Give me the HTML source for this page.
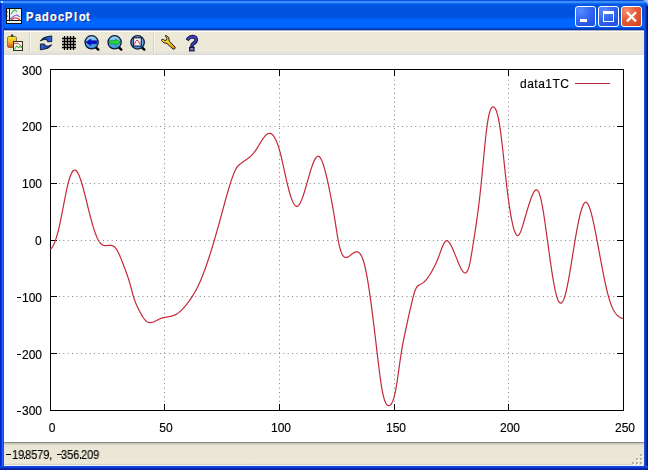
<!DOCTYPE html>
<html><head><meta charset="utf-8">
<style>
html,body{margin:0;padding:0;width:648px;height:470px;overflow:hidden;background:#b0bcf0;}
body{position:relative;font-family:"Liberation Sans",sans-serif;}
.a{position:absolute;}
#title{left:0;top:0;width:648px;height:30px;
background:linear-gradient(to bottom,#0a50d8 0px,#0a50d8 1px,#3a8cff 1px,#3c8eff 3px,#2070f0 3px,#0860e8 4px,#0056e2 5px,#0051dc 12px,#0054e2 17px,#005cf0 18px,#0066ff 20px,#0066ff 27px,#0060f8 27px,#0056e8 28px,#0036b4 29px,#0036b4 30px);}
#cornerR{left:640px;top:0;width:8px;height:8px;background:#a8b4f0;}
#titleR{left:0;top:0;width:648px;height:30px;border-top-right-radius:6px;overflow:hidden;}
#lb{left:0;top:3px;width:4px;height:467px;background:linear-gradient(to right,#0022cc 0px,#0022cc 1px,#0a36da 1px,#0a36da 2px,#2563ff 2px,#2563ff 3px,#1a4fd8 3px,#1a4fd8 4px);}
#rb{left:644px;top:6px;width:4px;height:464px;background:linear-gradient(to right,#1c50d8 0px,#1c50d8 1px,#0040d8 1px,#0040d8 2px,#0a2aa8 2px,#0a2aa8 3px,#00108a 3px,#00108a 4px);}
#bb{left:0;top:466px;width:648px;height:4px;background:linear-gradient(to bottom,#1a4ae0 0px,#1a4ae0 1px,#0a3ad8 1px,#0a3ad8 2px,#0828b0 2px,#0828b0 3px,#0a1e98 3px,#0a1e98 4px);}
#client{left:4px;top:30px;width:640px;height:436px;background:#fff;}
#tb{left:4px;top:30px;width:640px;height:25px;background:linear-gradient(to bottom,#a8b0c8 0px,#a8b0c8 1px,#fdfdf6 1px,#fdfdf6 2px,#ece9d8 2px,#ebe8d8 19px,#eeebdc 20px,#e8e6da 21px,#e6e4d9 23px,#dedcd6 24px,#dedcd6 25px);}
#sb{left:4px;top:442px;width:640px;height:24px;background:linear-gradient(to bottom,#8c8a84 0px,#8c8a84 1px,#c8c4b4 1px,#c8c4b4 2px,#dcd8c8 2px,#dcd8c8 3px,#e6e2d2 3px,#e9e6d6 4px,#ebe8d7 21px,#e4dfcc 22px,#dcd6c4 22px,#dcd6c4 23px,#e8ecf4 23px,#e8ecf4 24px);}
.btn{top:6px;width:19px;height:19px;border:1px solid #fff;border-radius:3px;}
.bl{background:radial-gradient(circle at 25% 20%,#5a8cff 0%,#3a6ff5 35%,#2556e6 75%,#1f4fd8 100%);}
#title-text{color:#fff;font-weight:bold;font-size:12px;line-height:14px;letter-spacing:0.5px;word-spacing:-3px;text-shadow:1px 1px 0 #0a1f8a;white-space:nowrap;}
.lbl{font-size:12px;color:#000;white-space:nowrap;line-height:12px;will-change:transform;-webkit-text-stroke:0.15px #000;}
.st{transform:scaleX(0.915);transform-origin:0 0;}
.tl{top:0;-webkit-text-stroke:0.25px #fff;transform:scaleX(0.92);transform-origin:0 0;}
.sep{top:33px;width:1px;height:20px;background:#d8d4c4;border-right:1px solid #f6f4ec;}
</style></head><body>
<div class="a" id="titleR"><div class="a" id="title"></div></div>
<div class="a" id="lb"></div>
<div class="a" style="left:1px;top:1px;width:2px;height:2px;background:#a0e8ff"></div>
<div class="a" id="rb"></div>
<div class="a" id="bb"></div>
<div class="a" id="client"></div>
<div class="a" id="tb"></div>
<div class="a" id="sb"></div>

<!-- app icon -->
<svg class="a" style="left:6px;top:8px" width="16" height="16" viewBox="0 0 16 16">
<rect x="0" y="0" width="16" height="16" fill="#101010"/>
<rect x="1" y="1" width="14" height="14" fill="#f4f2ee"/>
<rect x="3" y="1" width="1" height="12" fill="#101010"/>
<rect x="1" y="12" width="14" height="1" fill="#101010"/>
<rect x="1" y="3" width="1" height="2" fill="#e88a4a"/>
<rect x="1" y="7" width="1" height="2" fill="#8cd070"/>
<path d="M5,6 L7,3 L9,2 L11,4" stroke="#50c880" stroke-width="1.5" fill="none"/>
<path d="M4,11 L8,8 L11,7 L14,9" stroke="#8070e0" stroke-width="1.3" fill="none"/>
<path d="M5,12 L8,10 L11,10 L14,12" stroke="#e03030" stroke-width="1.2" fill="none"/>
</svg>
<div class="a" id="title-text" style="left:0;top:10px"><span class="a tl" style="left:26.0px">P</span><span class="a tl" style="left:34.9px">a</span><span class="a tl" style="left:42.3px">d</span><span class="a tl" style="left:50.0px">o</span><span class="a tl" style="left:57.5px">c</span><span class="a tl" style="left:65.1px">P</span><span class="a tl" style="left:74.1px">l</span><span class="a tl" style="left:78.6px">o</span><span class="a tl" style="left:86.4px">t</span></div>

<!-- title buttons -->
<div class="a btn bl" style="left:575px"><div class="a" style="left:4px;top:12px;width:7px;height:3px;background:#fff"></div></div>
<div class="a btn bl" style="left:598px"><div class="a" style="left:4px;top:4px;width:9px;height:7px;border:1px solid #fff;border-top-width:3px"></div></div>
<div class="a btn" style="left:621px;background:radial-gradient(circle at 25% 20%,#f59070 0%,#e8603c 40%,#d84a22 80%,#c8401c 100%)">
<svg class="a" style="left:0;top:0" width="19" height="19" viewBox="0 0 19 19"><path d="M5,5.2 L14,14.4 M14,5.2 L5,14.4" stroke="#fff" stroke-width="2.3" stroke-linecap="butt"/></svg></div>

<!-- toolbar icons -->
<svg class="a" style="left:4px;top:32px" width="22" height="22" viewBox="0 0 22 22">
<defs><linearGradient id="clip" x1="0" y1="0" x2="0" y2="1"><stop offset="0" stop-color="#f8e838"/><stop offset="0.55" stop-color="#f0b020"/><stop offset="1" stop-color="#d05018"/></linearGradient></defs>
<rect x="3.5" y="4.5" width="9" height="11" rx="1.5" fill="url(#clip)" stroke="#806030" stroke-width="0.8"/>
<rect x="6.8" y="2.6" width="2.6" height="2.2" rx="0.8" fill="#302828"/>
<rect x="9.5" y="9.5" width="9" height="9" fill="#f8f6f0" stroke="#383020" stroke-width="1"/>
<path d="M10,11.3 L14,11.3 L18,15" stroke="#c05040" stroke-width="1" fill="none"/>
<path d="M10.5,17.5 L12.5,14 L14.5,15.5 L16.5,14.5 L18,16" stroke="#40c040" stroke-width="1.1" fill="none"/>
</svg>
<div class="a sep" style="left:29px"></div>
<!-- refresh -->
<svg class="a" style="left:38px;top:34px" width="16" height="18" viewBox="0 0 16 18">
<defs><linearGradient id="rf" x1="0" y1="0" x2="1" y2="0"><stop offset="0" stop-color="#101c48"/><stop offset="0.45" stop-color="#1a48b0"/><stop offset="1" stop-color="#2f68d8"/></linearGradient></defs>
<path d="M2.4,6.9 Q4.8,3 9.5,2.6 L13.7,1.9 L13.7,7.7 L9.5,7.7 L8.8,5.6 Q5.5,5 2.4,6.9 Z" fill="url(#rf)" stroke="#08102c" stroke-width="0.9" stroke-linejoin="round"/>
<g transform="rotate(180 8.05 8.85)"><path d="M2.4,6.9 Q4.8,3 9.5,2.6 L13.7,1.9 L13.7,7.7 L9.5,7.7 L8.8,5.6 Q5.5,5 2.4,6.9 Z" fill="url(#rf)" stroke="#08102c" stroke-width="0.9" stroke-linejoin="round"/></g>
</svg>
<!-- grid -->
<svg class="a" style="left:62px;top:36px" width="14" height="14" viewBox="0 0 14 14">
<path d="M2.5,0 V14 M5.5,0 V14 M8.5,0 V14 M11.5,0 V14 M0,2.5 H14 M0,5.5 H14 M0,8.5 H14 M0,11.5 H14" stroke="#000" stroke-width="1.3"/>
</svg>
<!-- zoom back -->
<svg class="a" style="left:80px;top:32px" width="22" height="22" viewBox="0 0 22 22">
<defs><linearGradient id="lens" x1="0" y1="0" x2="0" y2="1"><stop offset="0" stop-color="#a8dcf8"/><stop offset="0.5" stop-color="#60b0ec"/><stop offset="1" stop-color="#3c90d8"/></linearGradient></defs>
<line x1="15.5" y1="15" x2="18.3" y2="17.6" stroke="#000" stroke-width="2.4" stroke-linecap="round"/>
<circle cx="11.6" cy="10.3" r="6.6" fill="url(#lens)" stroke="#0c1838" stroke-width="1.3"/>
<path d="M5.8,10.2 L10.8,7 L10.8,8.7 L16.8,8.8 L16.8,11.8 L10.8,11.8 L10.8,13.4 Z" fill="#0810d0" stroke="#000870" stroke-width="0.5"/>
</svg>
<!-- zoom forward -->
<svg class="a" style="left:103px;top:32px" width="22" height="22" viewBox="0 0 22 22">
<line x1="15.5" y1="15" x2="18.3" y2="17.6" stroke="#000" stroke-width="2.4" stroke-linecap="round"/>
<circle cx="11.6" cy="10.3" r="6.6" fill="url(#lens)" stroke="#0c1838" stroke-width="1.3"/>
<path d="M17.4,10.2 L12.4,7 L12.4,8.7 L6.4,8.8 L6.4,11.8 L12.4,11.8 L12.4,13.4 Z" fill="#20e030" stroke="#087010" stroke-width="0.5"/>
</svg>
<!-- zoom fit -->
<svg class="a" style="left:126px;top:32px" width="22" height="22" viewBox="0 0 22 22">
<line x1="15.5" y1="15" x2="18.3" y2="17.6" stroke="#000" stroke-width="2.4" stroke-linecap="round"/>
<circle cx="11.6" cy="10.4" r="6.7" fill="url(#lens)" stroke="#0c1838" stroke-width="1.3"/>
<rect x="7.3" y="5.8" width="8" height="8.3" fill="#fbeef2" stroke="#0c1040" stroke-width="1.1"/>
<path d="M8.5,12.5 Q9.5,8 11,8.2 Q12.5,8 14,12.5" stroke="#d03040" stroke-width="1" fill="none"/>
</svg>
<div class="a sep" style="left:153px"></div>
<!-- wrench -->
<svg class="a" style="left:157px;top:32px" width="22" height="22" viewBox="0 0 22 22">
<defs><linearGradient id="wr" x1="0" y1="0" x2="1" y2="1"><stop offset="0" stop-color="#f8f040"/><stop offset="0.6" stop-color="#f0c020"/><stop offset="1" stop-color="#e08010"/></linearGradient></defs>
<path d="M8.6,3.4 L10.2,4 L11.8,6 L12.2,9 L18.2,15.2 L17.8,16.8 L16.2,17.2 L10,11.5 L6.5,10.6 L4.6,8.4 L5,7.2 L6.2,7.4 L8,8.6 L9.6,8 L9.8,6.2 L8.4,4.4 Z" fill="url(#wr)" stroke="#281c08" stroke-width="1" stroke-linejoin="round"/>
</svg>
<!-- help -->
<svg class="a" style="left:181px;top:32px" width="22" height="22" viewBox="0 0 22 22">
<path d="M7.2,6.8 Q8.8,4.6 11.6,4.6 Q15.2,4.8 15.2,7.8 Q15.2,10 12.6,11.4 Q11,12.3 11,13.6" stroke="#10104a" stroke-width="3.6" fill="none" stroke-linecap="square"/>
<path d="M7.2,6.8 Q8.8,4.6 11.6,4.6 Q15.2,4.8 15.2,7.8 Q15.2,10 12.6,11.4 Q11,12.3 11,13.6" stroke="#4646c8" stroke-width="1.6" fill="none" stroke-linecap="square"/>
<rect x="8.6" y="15.4" width="4.4" height="3.4" fill="#8080c0" stroke="#10104a" stroke-width="1.2"/>
</svg>

<!-- plot -->
<svg class="a" style="left:0;top:0" width="648" height="470" viewBox="0 0 648 470">
<g stroke="#808080" stroke-width="1" stroke-dasharray="1,3.4" fill="none">
<path d="M58.9,126.5 H617 M58.9,183.5 H617 M58.9,240.5 H617 M58.9,296.5 H617 M58.9,353.5 H617"/>
<path d="M164.5,401.8 V76 M279.5,401.8 V76 M394.5,401.8 V76 M508.5,401.8 V76"/>
</g>
<g stroke="#000" stroke-width="1" fill="none">
<rect x="50.5" y="69.5" width="573" height="341"/>
<path d="M51,126.5 H57 M51,183.5 H57 M51,240.5 H57 M51,296.5 H57 M51,353.5 H57"/>
<path d="M617,126.5 H623 M617,183.5 H623 M617,240.5 H623 M617,296.5 H623 M617,353.5 H623"/>
<path d="M164.5,404 V410 M279.5,404 V410 M394.5,404 V410 M508.5,404 V410"/>
<path d="M164.5,70 V76 M279.5,70 V76 M394.5,70 V76 M508.5,70 V76"/>
</g>
<path d="M575,83.5 H610" stroke="#b8203a" stroke-width="1.1"/>
<path d="M50.0,249.60 L50.5,249.24 L51.0,248.78 L51.5,248.22 L52.0,247.56 L52.5,246.80 L53.0,245.93 L53.5,244.97 L54.0,243.90 L54.5,242.74 L55.0,241.47 L55.5,240.10 L56.0,238.63 L56.5,237.06 L57.0,235.39 L57.5,233.62 L58.0,231.74 L58.5,229.76 L59.0,227.69 L59.5,225.51 L60.0,223.23 L60.5,220.86 L61.0,218.41 L61.5,215.91 L62.0,213.35 L62.5,210.76 L63.0,208.14 L63.5,205.52 L64.0,202.91 L64.5,200.32 L65.0,197.76 L65.5,195.25 L66.0,192.80 L66.5,190.43 L67.0,188.15 L67.5,185.97 L68.0,183.91 L68.5,181.97 L69.0,180.18 L69.5,178.53 L70.0,177.02 L70.5,175.65 L71.0,174.43 L71.5,173.35 L72.0,172.42 L72.5,171.64 L73.0,171.02 L73.5,170.55 L74.0,170.23 L74.5,170.08 L75.0,170.08 L75.5,170.24 L76.0,170.56 L76.5,171.02 L77.0,171.63 L77.5,172.37 L78.0,173.23 L78.5,174.22 L79.0,175.33 L79.5,176.54 L80.0,177.86 L80.5,179.27 L81.0,180.77 L81.5,182.35 L82.0,184.00 L82.5,185.72 L83.0,187.51 L83.5,189.35 L84.0,191.24 L84.5,193.17 L85.0,195.14 L85.5,197.14 L86.0,199.16 L86.5,201.19 L87.0,203.23 L87.5,205.28 L88.0,207.32 L88.5,209.35 L89.0,211.37 L89.5,213.36 L90.0,215.31 L90.5,217.24 L91.0,219.12 L91.5,220.96 L92.0,222.75 L92.5,224.50 L93.0,226.19 L93.5,227.83 L94.0,229.41 L94.5,230.92 L95.0,232.37 L95.5,233.76 L96.0,235.07 L96.5,236.31 L97.0,237.46 L97.5,238.54 L98.0,239.54 L98.5,240.44 L99.0,241.27 L99.5,242.01 L100.0,242.67 L100.5,243.25 L101.0,243.76 L101.5,244.20 L102.0,244.58 L102.5,244.89 L103.0,245.14 L103.5,245.33 L104.0,245.47 L104.5,245.57 L105.0,245.62 L105.5,245.64 L106.0,245.64 L106.5,245.61 L107.0,245.57 L107.5,245.51 L108.0,245.45 L108.5,245.39 L109.0,245.34 L109.5,245.30 L110.0,245.28 L110.5,245.29 L111.0,245.33 L111.5,245.40 L112.0,245.52 L112.5,245.68 L113.0,245.90 L113.5,246.18 L114.0,246.52 L114.5,246.94 L115.0,247.43 L115.5,248.01 L116.0,248.67 L116.5,249.40 L117.0,250.20 L117.5,251.07 L118.0,252.00 L118.5,252.98 L119.0,254.02 L119.5,255.11 L120.0,256.25 L120.5,257.42 L121.0,258.64 L121.5,259.88 L122.0,261.15 L122.5,262.44 L123.0,263.75 L123.5,265.08 L124.0,266.41 L124.5,267.76 L125.0,269.10 L125.5,270.44 L126.0,271.79 L126.5,273.15 L127.0,274.54 L127.5,275.96 L128.0,277.43 L128.5,278.94 L129.0,280.52 L129.5,282.17 L130.0,283.89 L130.5,285.70 L131.0,287.57 L131.5,289.46 L132.0,291.35 L132.5,293.20 L133.0,294.99 L133.5,296.69 L134.0,298.28 L134.5,299.77 L135.0,301.17 L135.5,302.49 L136.0,303.74 L136.5,304.92 L137.0,306.05 L137.5,307.12 L138.0,308.15 L138.5,309.14 L139.0,310.11 L139.5,311.05 L140.0,311.99 L140.5,312.91 L141.0,313.83 L141.5,314.72 L142.0,315.59 L142.5,316.43 L143.0,317.24 L143.5,318.00 L144.0,318.71 L144.5,319.37 L145.0,319.96 L145.5,320.49 L146.0,320.95 L146.5,321.34 L147.0,321.68 L147.5,321.96 L148.0,322.19 L148.5,322.36 L149.0,322.49 L149.5,322.57 L150.0,322.61 L150.5,322.61 L151.0,322.57 L151.5,322.49 L152.0,322.39 L152.5,322.26 L153.0,322.10 L153.5,321.92 L154.0,321.72 L154.5,321.50 L155.0,321.26 L155.5,321.02 L156.0,320.77 L156.5,320.51 L157.0,320.25 L157.5,319.99 L158.0,319.73 L158.5,319.48 L159.0,319.24 L159.5,319.00 L160.0,318.79 L160.5,318.59 L161.0,318.40 L161.5,318.23 L162.0,318.08 L162.5,317.94 L163.0,317.80 L163.5,317.68 L164.0,317.57 L164.5,317.46 L165.0,317.37 L165.5,317.27 L166.0,317.18 L166.5,317.10 L167.0,317.01 L167.5,316.93 L168.0,316.84 L168.5,316.75 L169.0,316.66 L169.5,316.57 L170.0,316.47 L170.5,316.36 L171.0,316.25 L171.5,316.12 L172.0,315.99 L172.5,315.84 L173.0,315.68 L173.5,315.51 L174.0,315.32 L174.5,315.11 L175.0,314.89 L175.5,314.65 L176.0,314.39 L176.5,314.11 L177.0,313.80 L177.5,313.47 L178.0,313.13 L178.5,312.76 L179.0,312.37 L179.5,311.96 L180.0,311.54 L180.5,311.09 L181.0,310.63 L181.5,310.15 L182.0,309.65 L182.5,309.14 L183.0,308.61 L183.5,308.07 L184.0,307.51 L184.5,306.94 L185.0,306.36 L185.5,305.76 L186.0,305.15 L186.5,304.53 L187.0,303.89 L187.5,303.25 L188.0,302.59 L188.5,301.93 L189.0,301.25 L189.5,300.56 L190.0,299.86 L190.5,299.14 L191.0,298.41 L191.5,297.66 L192.0,296.90 L192.5,296.12 L193.0,295.32 L193.5,294.50 L194.0,293.67 L194.5,292.81 L195.0,291.93 L195.5,291.03 L196.0,290.11 L196.5,289.16 L197.0,288.19 L197.5,287.20 L198.0,286.18 L198.5,285.13 L199.0,284.06 L199.5,282.96 L200.0,281.83 L200.5,280.68 L201.0,279.50 L201.5,278.29 L202.0,277.06 L202.5,275.81 L203.0,274.53 L203.5,273.23 L204.0,271.91 L204.5,270.56 L205.0,269.19 L205.5,267.80 L206.0,266.39 L206.5,264.96 L207.0,263.51 L207.5,262.04 L208.0,260.55 L208.5,259.04 L209.0,257.51 L209.5,255.97 L210.0,254.40 L210.5,252.82 L211.0,251.23 L211.5,249.61 L212.0,247.98 L212.5,246.34 L213.0,244.68 L213.5,243.01 L214.0,241.32 L214.5,239.62 L215.0,237.91 L215.5,236.19 L216.0,234.45 L216.5,232.70 L217.0,230.94 L217.5,229.17 L218.0,227.39 L218.5,225.60 L219.0,223.80 L219.5,221.99 L220.0,220.18 L220.5,218.35 L221.0,216.52 L221.5,214.68 L222.0,212.84 L222.5,210.99 L223.0,209.14 L223.5,207.29 L224.0,205.45 L224.5,203.61 L225.0,201.78 L225.5,199.96 L226.0,198.15 L226.5,196.36 L227.0,194.59 L227.5,192.84 L228.0,191.11 L228.5,189.41 L229.0,187.73 L229.5,186.08 L230.0,184.47 L230.5,182.89 L231.0,181.35 L231.5,179.85 L232.0,178.39 L232.5,176.97 L233.0,175.61 L233.5,174.29 L234.0,173.04 L234.5,171.85 L235.0,170.74 L235.5,169.71 L236.0,168.76 L236.5,167.91 L237.0,167.15 L237.5,166.50 L238.0,165.93 L238.5,165.44 L239.0,164.98 L239.5,164.56 L240.0,164.15 L240.5,163.75 L241.0,163.37 L241.5,162.99 L242.0,162.63 L242.5,162.27 L243.0,161.91 L243.5,161.57 L244.0,161.22 L244.5,160.87 L245.0,160.53 L245.5,160.18 L246.0,159.83 L246.5,159.48 L247.0,159.12 L247.5,158.75 L248.0,158.37 L248.5,157.99 L249.0,157.59 L249.5,157.17 L250.0,156.75 L250.5,156.30 L251.0,155.84 L251.5,155.36 L252.0,154.85 L252.5,154.32 L253.0,153.77 L253.5,153.19 L254.0,152.59 L254.5,151.95 L255.0,151.28 L255.5,150.58 L256.0,149.85 L256.5,149.09 L257.0,148.31 L257.5,147.52 L258.0,146.71 L258.5,145.89 L259.0,145.06 L259.5,144.24 L260.0,143.41 L260.5,142.59 L261.0,141.78 L261.5,140.98 L262.0,140.20 L262.5,139.45 L263.0,138.71 L263.5,138.01 L264.0,137.34 L264.5,136.71 L265.0,136.12 L265.5,135.57 L266.0,135.07 L266.5,134.63 L267.0,134.24 L267.5,133.91 L268.0,133.65 L268.5,133.45 L269.0,133.33 L269.5,133.28 L270.0,133.31 L270.5,133.42 L271.0,133.62 L271.5,133.89 L272.0,134.25 L272.5,134.69 L273.0,135.22 L273.5,135.83 L274.0,136.53 L274.5,137.31 L275.0,138.19 L275.5,139.15 L276.0,140.20 L276.5,141.35 L277.0,142.59 L277.5,143.92 L278.0,145.34 L278.5,146.86 L279.0,148.48 L279.5,150.19 L280.0,152.01 L280.5,153.91 L281.0,155.91 L281.5,157.98 L282.0,160.12 L282.5,162.31 L283.0,164.54 L283.5,166.81 L284.0,169.09 L284.5,171.38 L285.0,173.66 L285.5,175.93 L286.0,178.18 L286.5,180.38 L287.0,182.54 L287.5,184.63 L288.0,186.66 L288.5,188.62 L289.0,190.50 L289.5,192.29 L290.0,194.01 L290.5,195.63 L291.0,197.15 L291.5,198.58 L292.0,199.90 L292.5,201.12 L293.0,202.21 L293.5,203.20 L294.0,204.05 L294.5,204.78 L295.0,205.38 L295.5,205.84 L296.0,206.15 L296.5,206.32 L297.0,206.34 L297.5,206.20 L298.0,205.91 L298.5,205.47 L299.0,204.90 L299.5,204.19 L300.0,203.36 L300.5,202.42 L301.0,201.37 L301.5,200.21 L302.0,198.97 L302.5,197.64 L303.0,196.23 L303.5,194.75 L304.0,193.21 L304.5,191.62 L305.0,189.97 L305.5,188.29 L306.0,186.58 L306.5,184.84 L307.0,183.09 L307.5,181.32 L308.0,179.56 L308.5,177.80 L309.0,176.05 L309.5,174.33 L310.0,172.64 L310.5,170.99 L311.0,169.39 L311.5,167.84 L312.0,166.35 L312.5,164.93 L313.0,163.59 L313.5,162.34 L314.0,161.18 L314.5,160.12 L315.0,159.17 L315.5,158.35 L316.0,157.64 L316.5,157.08 L317.0,156.65 L317.5,156.37 L318.0,156.26 L318.5,156.30 L319.0,156.52 L319.5,156.91 L320.0,157.46 L320.5,158.16 L321.0,159.01 L321.5,160.01 L322.0,161.13 L322.5,162.39 L323.0,163.78 L323.5,165.27 L324.0,166.88 L324.5,168.60 L325.0,170.41 L325.5,172.31 L326.0,174.30 L326.5,176.37 L327.0,178.50 L327.5,180.71 L328.0,182.98 L328.5,185.29 L329.0,187.67 L329.5,190.10 L330.0,192.58 L330.5,195.12 L331.0,197.71 L331.5,200.37 L332.0,203.08 L332.5,205.84 L333.0,208.67 L333.5,211.55 L334.0,214.50 L334.5,217.50 L335.0,220.57 L335.5,223.70 L336.0,226.88 L336.5,230.10 L337.0,233.28 L337.5,236.36 L338.0,239.25 L338.5,241.90 L339.0,244.29 L339.5,246.44 L340.0,248.36 L340.5,250.06 L341.0,251.54 L341.5,252.83 L342.0,253.93 L342.5,254.86 L343.0,255.63 L343.5,256.24 L344.0,256.72 L344.5,257.06 L345.0,257.29 L345.5,257.42 L346.0,257.45 L346.5,257.40 L347.0,257.28 L347.5,257.10 L348.0,256.88 L348.5,256.61 L349.0,256.30 L349.5,255.96 L350.0,255.60 L350.5,255.22 L351.0,254.83 L351.5,254.44 L352.0,254.05 L352.5,253.67 L353.0,253.31 L353.5,252.97 L354.0,252.66 L354.5,252.39 L355.0,252.16 L355.5,251.98 L356.0,251.85 L356.5,251.79 L357.0,251.80 L357.5,251.88 L358.0,252.05 L358.5,252.30 L359.0,252.65 L359.5,253.10 L360.0,253.67 L360.5,254.34 L361.0,255.14 L361.5,256.07 L362.0,257.14 L362.5,258.34 L363.0,259.70 L363.5,261.21 L364.0,262.88 L364.5,264.72 L365.0,266.74 L365.5,268.94 L366.0,271.31 L366.5,273.84 L367.0,276.54 L367.5,279.38 L368.0,282.37 L368.5,285.49 L369.0,288.74 L369.5,292.10 L370.0,295.58 L370.5,299.16 L371.0,302.83 L371.5,306.60 L372.0,310.44 L372.5,314.36 L373.0,318.34 L373.5,322.38 L374.0,326.46 L374.5,330.59 L375.0,334.76 L375.5,338.95 L376.0,343.17 L376.5,347.39 L377.0,351.62 L377.5,355.85 L378.0,360.05 L378.5,364.20 L379.0,368.27 L379.5,372.23 L380.0,376.04 L380.5,379.69 L381.0,383.13 L381.5,386.35 L382.0,389.31 L382.5,391.98 L383.0,394.37 L383.5,396.49 L384.0,398.36 L384.5,399.97 L385.0,401.36 L385.5,402.52 L386.0,403.48 L386.5,404.25 L387.0,404.84 L387.5,405.25 L388.0,405.52 L388.5,405.64 L389.0,405.63 L389.5,405.50 L390.0,405.25 L390.5,404.87 L391.0,404.33 L391.5,403.64 L392.0,402.77 L392.5,401.72 L393.0,400.48 L393.5,399.02 L394.0,397.35 L394.5,395.44 L395.0,393.28 L395.5,390.87 L396.0,388.19 L396.5,385.26 L397.0,382.13 L397.5,378.83 L398.0,375.40 L398.5,371.89 L399.0,368.34 L399.5,364.79 L400.0,361.29 L400.5,357.86 L401.0,354.57 L401.5,351.43 L402.0,348.47 L402.5,345.66 L403.0,342.98 L403.5,340.41 L404.0,337.93 L404.5,335.52 L405.0,333.15 L405.5,330.81 L406.0,328.48 L406.5,326.15 L407.0,323.83 L407.5,321.52 L408.0,319.22 L408.5,316.94 L409.0,314.68 L409.5,312.44 L410.0,310.22 L410.5,308.04 L411.0,305.89 L411.5,303.77 L412.0,301.69 L412.5,299.65 L413.0,297.67 L413.5,295.78 L414.0,294.01 L414.5,292.36 L415.0,290.88 L415.5,289.58 L416.0,288.48 L416.5,287.58 L417.0,286.85 L417.5,286.26 L418.0,285.78 L418.5,285.41 L419.0,285.10 L419.5,284.83 L420.0,284.58 L420.5,284.33 L421.0,284.05 L421.5,283.76 L422.0,283.45 L422.5,283.11 L423.0,282.75 L423.5,282.36 L424.0,281.95 L424.5,281.50 L425.0,281.03 L425.5,280.52 L426.0,279.98 L426.5,279.40 L427.0,278.79 L427.5,278.14 L428.0,277.46 L428.5,276.75 L429.0,276.01 L429.5,275.25 L430.0,274.45 L430.5,273.64 L431.0,272.80 L431.5,271.94 L432.0,271.05 L432.5,270.15 L433.0,269.24 L433.5,268.30 L434.0,267.34 L434.5,266.35 L435.0,265.33 L435.5,264.28 L436.0,263.20 L436.5,262.09 L437.0,260.93 L437.5,259.73 L438.0,258.49 L438.5,257.20 L439.0,255.86 L439.5,254.50 L440.0,253.11 L440.5,251.73 L441.0,250.37 L441.5,249.03 L442.0,247.74 L442.5,246.51 L443.0,245.36 L443.5,244.30 L444.0,243.35 L444.5,242.51 L445.0,241.82 L445.5,241.28 L446.0,240.90 L446.5,240.71 L447.0,240.70 L447.5,240.86 L448.0,241.16 L448.5,241.60 L449.0,242.17 L449.5,242.83 L450.0,243.59 L450.5,244.43 L451.0,245.33 L451.5,246.30 L452.0,247.33 L452.5,248.41 L453.0,249.53 L453.5,250.69 L454.0,251.89 L454.5,253.11 L455.0,254.35 L455.5,255.60 L456.0,256.86 L456.5,258.12 L457.0,259.38 L457.5,260.63 L458.0,261.85 L458.5,263.06 L459.0,264.23 L459.5,265.37 L460.0,266.46 L460.5,267.50 L461.0,268.49 L461.5,269.41 L462.0,270.24 L462.5,270.99 L463.0,271.63 L463.5,272.16 L464.0,272.58 L464.5,272.85 L465.0,272.98 L465.5,272.95 L466.0,272.73 L466.5,272.32 L467.0,271.70 L467.5,270.85 L468.0,269.76 L468.5,268.41 L469.0,266.78 L469.5,264.87 L470.0,262.66 L470.5,260.14 L471.0,257.35 L471.5,254.37 L472.0,251.24 L472.5,248.02 L473.0,244.77 L473.5,241.55 L474.0,238.38 L474.5,235.25 L475.0,232.10 L475.5,228.89 L476.0,225.59 L476.5,222.19 L477.0,218.67 L477.5,215.03 L478.0,211.26 L478.5,207.34 L479.0,203.27 L479.5,199.05 L480.0,194.65 L480.5,190.07 L481.0,185.30 L481.5,180.33 L482.0,175.20 L482.5,169.95 L483.0,164.64 L483.5,159.32 L484.0,154.04 L484.5,148.86 L485.0,143.84 L485.5,139.02 L486.0,134.46 L486.5,130.22 L487.0,126.34 L487.5,122.87 L488.0,119.81 L488.5,117.12 L489.0,114.80 L489.5,112.82 L490.0,111.16 L490.5,109.81 L491.0,108.73 L491.5,107.92 L492.0,107.36 L492.5,107.02 L493.0,106.88 L493.5,106.92 L494.0,107.14 L494.5,107.56 L495.0,108.17 L495.5,108.99 L496.0,110.03 L496.5,111.30 L497.0,112.82 L497.5,114.59 L498.0,116.63 L498.5,118.94 L499.0,121.55 L499.5,124.45 L500.0,127.66 L500.5,131.18 L501.0,134.96 L501.5,138.97 L502.0,143.18 L502.5,147.55 L503.0,152.05 L503.5,156.63 L504.0,161.27 L504.5,165.92 L505.0,170.56 L505.5,175.14 L506.0,179.63 L506.5,184.00 L507.0,188.21 L507.5,192.27 L508.0,196.17 L508.5,199.91 L509.0,203.48 L509.5,206.89 L510.0,210.12 L510.5,213.19 L511.0,216.08 L511.5,218.79 L512.0,221.31 L512.5,223.64 L513.0,225.78 L513.5,227.72 L514.0,229.46 L514.5,230.99 L515.0,232.30 L515.5,233.40 L516.0,234.28 L516.5,234.94 L517.0,235.36 L517.5,235.55 L518.0,235.49 L518.5,235.20 L519.0,234.69 L519.5,233.96 L520.0,233.05 L520.5,231.97 L521.0,230.74 L521.5,229.38 L522.0,227.91 L522.5,226.34 L523.0,224.70 L523.5,223.00 L524.0,221.27 L524.5,219.51 L525.0,217.76 L525.5,216.02 L526.0,214.30 L526.5,212.60 L527.0,210.93 L527.5,209.28 L528.0,207.66 L528.5,206.06 L529.0,204.50 L529.5,202.97 L530.0,201.47 L530.5,200.00 L531.0,198.59 L531.5,197.23 L532.0,195.95 L532.5,194.75 L533.0,193.65 L533.5,192.67 L534.0,191.80 L534.5,191.08 L535.0,190.51 L535.5,190.10 L536.0,189.86 L536.5,189.82 L537.0,189.97 L537.5,190.33 L538.0,190.91 L538.5,191.72 L539.0,192.77 L539.5,194.06 L540.0,195.61 L540.5,197.42 L541.0,199.48 L541.5,201.76 L542.0,204.27 L542.5,206.97 L543.0,209.84 L543.5,212.88 L544.0,216.05 L544.5,219.35 L545.0,222.76 L545.5,226.25 L546.0,229.82 L546.5,233.43 L547.0,237.09 L547.5,240.75 L548.0,244.42 L548.5,248.08 L549.0,251.72 L549.5,255.32 L550.0,258.87 L550.5,262.37 L551.0,265.79 L551.5,269.14 L552.0,272.39 L552.5,275.54 L553.0,278.58 L553.5,281.48 L554.0,284.25 L554.5,286.87 L555.0,289.33 L555.5,291.61 L556.0,293.71 L556.5,295.61 L557.0,297.30 L557.5,298.78 L558.0,300.04 L558.5,301.08 L559.0,301.90 L559.5,302.52 L560.0,302.92 L560.5,303.11 L561.0,303.09 L561.5,302.87 L562.0,302.44 L562.5,301.81 L563.0,300.98 L563.5,299.94 L564.0,298.71 L564.5,297.28 L565.0,295.66 L565.5,293.85 L566.0,291.88 L566.5,289.74 L567.0,287.46 L567.5,285.04 L568.0,282.50 L568.5,279.84 L569.0,277.09 L569.5,274.25 L570.0,271.33 L570.5,268.35 L571.0,265.32 L571.5,262.25 L572.0,259.16 L572.5,256.05 L573.0,252.93 L573.5,249.82 L574.0,246.74 L574.5,243.68 L575.0,240.67 L575.5,237.72 L576.0,234.83 L576.5,232.01 L577.0,229.28 L577.5,226.63 L578.0,224.07 L578.5,221.62 L579.0,219.28 L579.5,217.06 L580.0,214.96 L580.5,212.99 L581.0,211.16 L581.5,209.48 L582.0,207.96 L582.5,206.59 L583.0,205.40 L583.5,204.38 L584.0,203.55 L584.5,202.91 L585.0,202.47 L585.5,202.24 L586.0,202.22 L586.5,202.41 L587.0,202.81 L587.5,203.40 L588.0,204.18 L588.5,205.14 L589.0,206.26 L589.5,207.55 L590.0,208.99 L590.5,210.57 L591.0,212.28 L591.5,214.12 L592.0,216.08 L592.5,218.14 L593.0,220.31 L593.5,222.56 L594.0,224.90 L594.5,227.31 L595.0,229.79 L595.5,232.32 L596.0,234.90 L596.5,237.52 L597.0,240.16 L597.5,242.83 L598.0,245.52 L598.5,248.22 L599.0,250.92 L599.5,253.62 L600.0,256.32 L600.5,259.01 L601.0,261.69 L601.5,264.34 L602.0,266.97 L602.5,269.57 L603.0,272.14 L603.5,274.66 L604.0,277.14 L604.5,279.57 L605.0,281.94 L605.5,284.25 L606.0,286.49 L606.5,288.66 L607.0,290.76 L607.5,292.77 L608.0,294.70 L608.5,296.54 L609.0,298.27 L609.5,299.92 L610.0,301.47 L610.5,302.93 L611.0,304.31 L611.5,305.60 L612.0,306.81 L612.5,307.95 L613.0,309.00 L613.5,309.99 L614.0,310.90 L614.5,311.75 L615.0,312.53 L615.5,313.25 L616.0,313.91 L616.5,314.51 L617.0,315.06 L617.5,315.56 L618.0,316.01 L618.5,316.41 L619.0,316.77 L619.5,317.08 L620.0,317.36 L620.5,317.61 L621.0,317.82 L621.5,318.00 L622.0,318.15 L622.5,318.28 L623.0,318.39" stroke="#c42838" stroke-width="1.2" fill="none"/>
</svg>
<div class="a lbl" style="right:606px;top:65px">300</div>
<div class="a lbl" style="right:606px;top:121px">200</div>
<div class="a lbl" style="right:606px;top:178px">100</div>
<div class="a lbl" style="right:606px;top:235px">0</div>
<div class="a lbl" style="right:606px;top:292px">100</div><div class="a" style="left:17px;top:297px;width:4px;height:1px;background:#000"></div>
<div class="a lbl" style="right:606px;top:349px">200</div><div class="a" style="left:17px;top:354px;width:4px;height:1px;background:#000"></div>
<div class="a lbl" style="right:606px;top:405px">300</div><div class="a" style="left:17px;top:411px;width:4px;height:1px;background:#000"></div>
<div class="a lbl" style="left:52.3px;top:422px;width:40px;margin-left:-20px;text-align:center">0</div>
<div class="a lbl" style="left:166.3px;top:422px;width:40px;margin-left:-20px;text-align:center">50</div>
<div class="a lbl" style="left:281.3px;top:422px;width:40px;margin-left:-20px;text-align:center">100</div>
<div class="a lbl" style="left:396.3px;top:422px;width:40px;margin-left:-20px;text-align:center">150</div>
<div class="a lbl" style="left:510.3px;top:422px;width:40px;margin-left:-20px;text-align:center">200</div>
<div class="a lbl" style="left:625.3px;top:422px;width:40px;margin-left:-20px;text-align:center">250</div>
<div class="a lbl" style="left:519.6px;top:78px;letter-spacing:0.5px">data1TC</div>
<div class="a" style="left:6px;top:454px;width:5px;height:1px;background:#000"></div>
<div class="a" style="left:57px;top:454px;width:5px;height:1px;background:#000"></div>
<div class="a lbl st" style="left:11.5px;top:449px">19</div>
<div class="a" style="left:24px;top:457px;width:1px;height:2px;background:#000"></div>
<div class="a lbl st" style="left:25px;top:449px">8579</div>
<div class="a lbl st" style="left:48.8px;top:449px">,</div>
<div class="a lbl st" style="left:61.3px;top:449px">356</div>
<div class="a" style="left:80px;top:457px;width:1px;height:2px;background:#000"></div>
<div class="a lbl st" style="left:81.4px;top:449px">209</div>

<!-- grip -->
<svg class="a" style="left:629px;top:452px" width="14" height="14" viewBox="0 0 14 14">
<g fill="#fff"><rect x="4" y="11" width="2" height="2"/><rect x="8" y="11" width="2" height="2"/><rect x="12" y="11" width="2" height="2"/><rect x="8" y="7" width="2" height="2"/><rect x="12" y="7" width="2" height="2"/><rect x="12" y="3" width="2" height="2"/></g>
<g fill="#b8b0a0"><rect x="3" y="10" width="2" height="2"/><rect x="7" y="10" width="2" height="2"/><rect x="11" y="10" width="2" height="2"/><rect x="7" y="6" width="2" height="2"/><rect x="11" y="6" width="2" height="2"/><rect x="11" y="2" width="2" height="2"/></g>
</svg>
</body></html>
